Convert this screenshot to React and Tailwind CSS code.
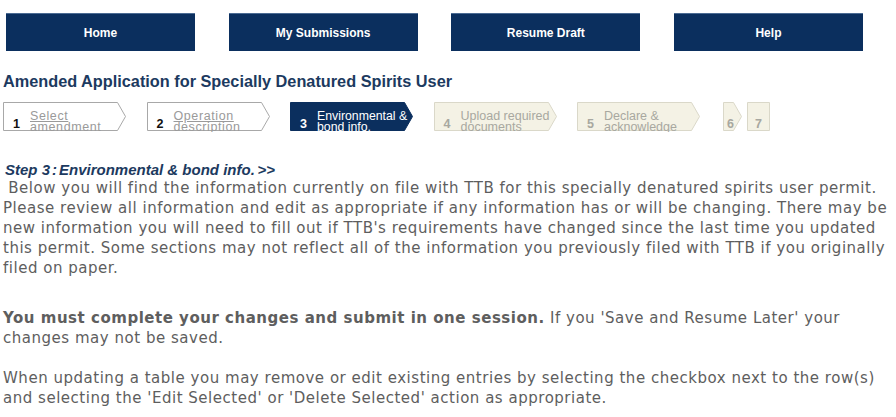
import React from "react";

const NAV = ["Home", "My Submissions", "Resume Draft", "Help"];

const STEPS = [
  { n: 1, label: ["Select", "amendment"], kind: "done" },
  { n: 2, label: ["Operation", "description"], kind: "done" },
  { n: 3, label: ["Environmental &", "bond info."], kind: "current" },
  { n: 4, label: ["Upload required", "documents"], kind: "todo" },
  { n: 5, label: ["Declare &", "acknowledge"], kind: "todo" },
];

const SHAPE = {
  done: { fill: "#ffffff", stroke: "#a8a8a8" },
  current: { fill: "#0b2f5e", stroke: "#0b2f5e" },
  todo: { fill: "#f4f2e5", stroke: "#dad8c9" },
};

const PARA1 = [
  "\u00a0Below you will find the information currently on file with TTB for this specially denatured spirits user permit.",
  "Please review all information and edit as appropriate if any information has or will be changing. There may be",
  "new information you will need to fill out if TTB's requirements have changed since the last time you updated",
  "this permit. Some sections may not reflect all of the information you previously filed with TTB if you originally",
  "filed on paper.",
];

const PARA3 = [
  "When updating a table you may remove or edit existing entries by selecting the checkbox next to the row(s)",
  "and selecting the 'Edit Selected' or 'Delete Selected' action as appropriate.",
];

function ArrowBox({ w, kind, tip = true }) {
  const s = SHAPE[kind];
  const pts = tip
    ? `0.5,0.5 ${w - 8.5},0.5 ${w - 0.5},14.5 ${w - 8.5},28.5 0.5,28.5`
    : `0.5,0.5 ${w - 0.5},0.5 ${w - 0.5},28.5 0.5,28.5`;
  return (
    <svg className="absolute inset-0" width={w} height="29" viewBox={`0 0 ${w} 29`}>
      <polygon points={pts} fill={s.fill} stroke={s.stroke} strokeWidth="1" />
    </svg>
  );
}

function Step({ step }) {
  const { n, label, kind } = step;
  const numColor = kind === "done" ? "text-[#111]" : kind === "current" ? "text-white" : "text-[#a8a8a0]";
  const lblColor =
    kind === "done"
      ? "text-[#9a9a9a] underline text-[12.5px] tracking-[0.6px]"
      : kind === "current"
      ? "text-white text-[12.3px]"
      : "text-[#a8a8a0] text-[12.5px]";
  return (
    <div className="relative w-[123px] h-[29px] shrink-0">
      <ArrowBox w={123} kind={kind} />
      <div className="relative flex items-start h-[30px] overflow-hidden pl-[10px] pt-[9px]">
        <span className={`w-[17px] mt-[7px] text-[12.5px] leading-[12px] font-bold ${numColor}`}>{n}</span>
        <span className={`leading-[11px] whitespace-nowrap ${lblColor}`}>
          {label[0]}
          <br />
          {label[1]}
        </span>
      </div>
    </div>
  );
}

function SmallStep({ n, w, tip }) {
  return (
    <div className="relative h-[29px] shrink-0" style={{ width: w }}>
      <ArrowBox w={w} kind="todo" tip={tip} />
      <div
        className={`relative flex pt-[16px] text-[12.5px] leading-[12px] font-bold text-[#a8a8a0] ${
          tip ? "pl-[4px]" : "justify-center"
        }`}
      >
        {n}
      </div>
    </div>
  );
}

export default function App() {
  return (
    <div className="w-[896px] h-[417px] bg-white overflow-hidden font-['Liberation_Sans',Arial,sans-serif]">
      <nav className="flex justify-between w-[857px] ml-[6px] pt-[13px]">
        {NAV.map((n) => (
          <div
            key={n}
            className="w-[189px] h-[38px] bg-[#0b2f5e] border-t border-[#4b6b93] flex items-center justify-center text-white text-[12px] font-bold"
          >
            {n}
          </div>
        ))}
      </nav>

      <h1 className="mt-[20px] pl-[3px] text-[16.3px] leading-[20px] font-bold text-[#1c3a60]">
        Amended Application for Specially Denatured Spirits User
      </h1>

      <div className="flex items-start mt-[11px] pl-[3px]">
        <div className="flex gap-[20.5px]">
          {STEPS.map((s) => (
            <Step key={s.n} step={s} />
          ))}
        </div>
        <div className="ml-[23px] flex gap-[5px]">
          <SmallStep n={6} w={19} tip />
          <SmallStep n={7} w={23} tip={false} />
        </div>
      </div>

      <div className="mt-[31px] pl-[5px] text-[15px] leading-[16px] font-bold text-[#1c3a60]">
        <span className="italic">
          Step 3<span className="mx-[2px]">:</span>Environmental &amp; bond info.
        </span>
        <span className="ml-[3px]">&gt;&gt;</span>
      </div>

      <div className="pl-[3px] font-['DejaVu_Sans',Verdana,sans-serif] text-[15px] tracking-[0.52px] leading-[20px] text-[#5e5e5e] whitespace-nowrap">
        <p>
          {PARA1.map((l) => (
            <span key={l} className="block">
              {l}
            </span>
          ))}
        </p>
        <p className="mt-[30px]">
          <span className="block">
            <b>You must complete your changes and submit in one session.</b> If you 'Save and Resume Later' your
          </span>
          <span className="block">changes may not be saved.</span>
        </p>
        <p className="mt-[20px]">
          {PARA3.map((l) => (
            <span key={l} className="block">
              {l}
            </span>
          ))}
        </p>
      </div>
    </div>
  );
}
